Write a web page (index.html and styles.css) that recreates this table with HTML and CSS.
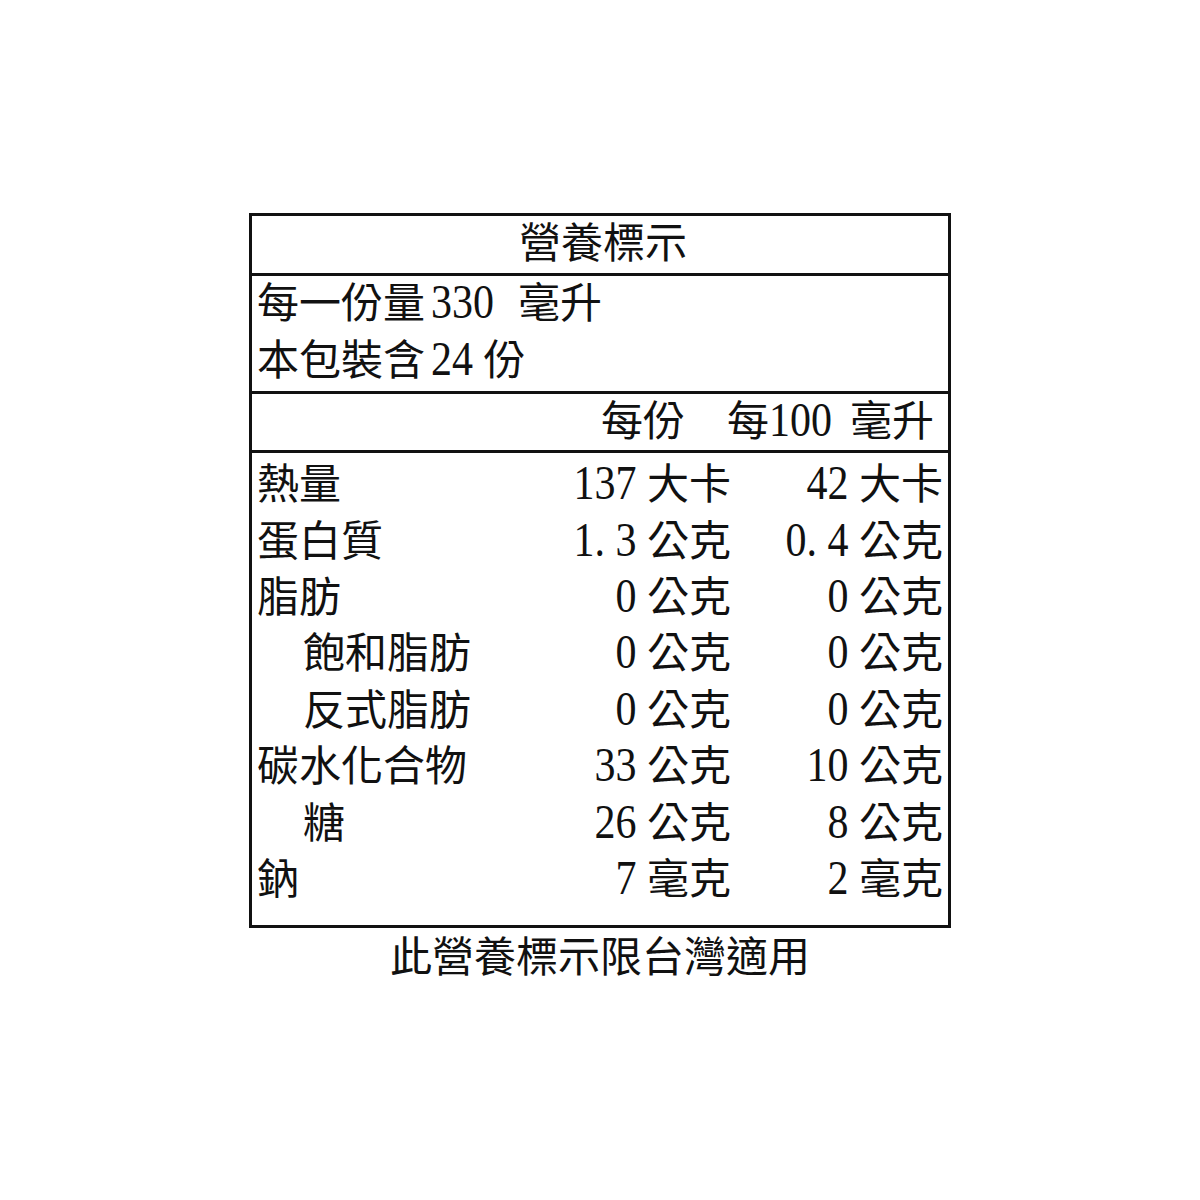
FILE: index.html
```html
<!DOCTYPE html>
<html lang="zh-Hant">
<head>
<meta charset="utf-8">
<title>營養標示</title>
<link rel="stylesheet" href="styles.css">
</head>
<body>
<div class="page">
  <div class="label">
    <div class="title">營養標示</div>
    <div class="serving">
      <div>每一份量<span class="n lead">330</span><span class="gap"></span>毫升</div>
      <div>本包裝含<span class="n lead">24</span> 份</div>
    </div>
    <div class="colhead">每份　每<span class="n">100</span><span class="gap2"></span>毫升</div>
    <div class="data">
      <div class="name">熱量</div><div class="v1"><span class="n">137</span> 大卡</div><div class="v2"><span class="n">42</span> 大卡</div>
      <div class="name">蛋白質</div><div class="v1"><span class="n">1<span class="dot">.</span>3</span> 公克</div><div class="v2"><span class="n">0<span class="dot">.</span>4</span> 公克</div>
      <div class="name">脂肪</div><div class="v1"><span class="n">0</span> 公克</div><div class="v2"><span class="n">0</span> 公克</div>
      <div class="name sub">飽和脂肪</div><div class="v1"><span class="n">0</span> 公克</div><div class="v2"><span class="n">0</span> 公克</div>
      <div class="name sub">反式脂肪</div><div class="v1"><span class="n">0</span> 公克</div><div class="v2"><span class="n">0</span> 公克</div>
      <div class="name">碳水化合物</div><div class="v1"><span class="n">33</span> 公克</div><div class="v2"><span class="n">10</span> 公克</div>
      <div class="name sub">糖</div><div class="v1"><span class="n">26</span> 公克</div><div class="v2"><span class="n">8</span> 公克</div>
      <div class="name">鈉</div><div class="v1"><span class="n">7</span> 毫克</div><div class="v2"><span class="n">2</span> 毫克</div>
    </div>
  </div>
  <div class="note">此營養標示限台灣適用</div>
</div>
</body>
</html>
```

FILE: styles.css
```css
html, body {
  margin: 0;
  padding: 0;
  background: #ffffff;
}

body {
  font-family: "Liberation Serif", "Noto Sans CJK TC", serif;
  font-size: 42px;
  color: #111111;
}

.page {
  padding-top: 213px;
}

.label {
  width: 696px;
  margin: 0 auto;
  border: 3px solid #111111;
}

.title {
  line-height: 57px;
  text-align: center;
  padding-left: 6px;
}

.serving {
  border-top: 3px solid #111111;
  padding: 0 0 1px 5px;
  line-height: 57px;
}

.colhead {
  border-top: 3px solid #111111;
  line-height: 56px;
  text-align: right;
  padding-right: 14px;
}

.data {
  border-top: 3px solid #111111;
  display: grid;
  grid-template-columns: 1fr 212px 212px;
  grid-auto-rows: 56.4px;
  align-items: center;
  padding: 4px 5px 17px 5px;
  line-height: 56px;
}

.name {
  white-space: nowrap;
}

.name.sub {
  padding-left: 46px;
}

.v1,
.v2 {
  text-align: right;
  white-space: nowrap;
}

.n {
  display: inline-block;
  transform: scaleY(1.15);
  transform-origin: 50% 75%;
}

.n.lead {
  margin-left: 6px;
}

.dot {
  display: inline-block;
  width: 21px;
  text-align: left;
}

.gap {
  display: inline-block;
  width: 24px;
}

.gap2 {
  display: inline-block;
  width: 18px;
}

.note {
  text-align: center;
  line-height: 56px;
  padding-top: 2px;
}
```
